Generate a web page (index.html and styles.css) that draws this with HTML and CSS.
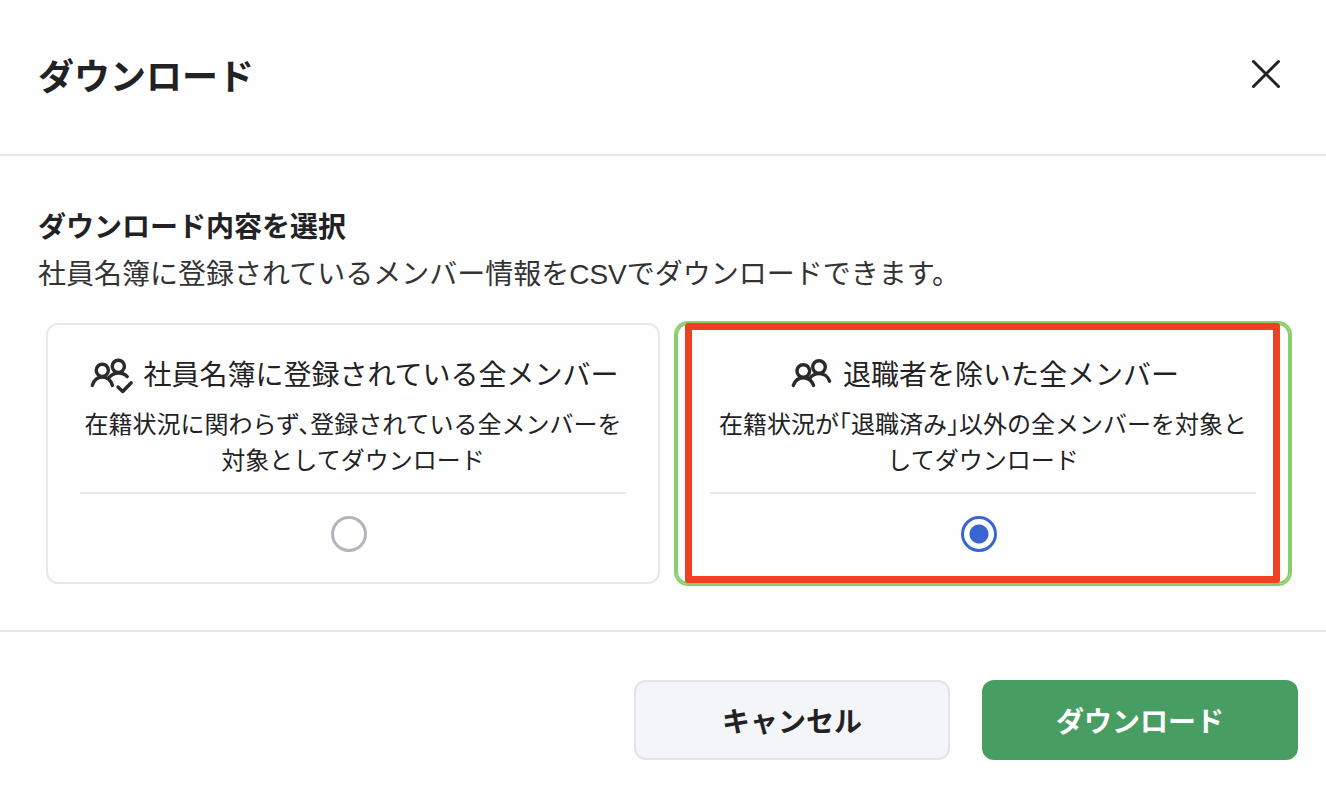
FILE: index.html
```html
<!DOCTYPE html>
<html lang="ja">
<head>
<meta charset="UTF-8" />
<meta name="viewport" content="width=device-width, initial-scale=1" />
<title>ダウンロード</title>
<link rel="stylesheet" href="styles.css">
</head>
<body>
<main class="modal">
    <header class="modal-header">
        <h1>ダウンロード</h1>
        <button type="button" class="close-btn" aria-label="閉じる">
            <svg viewBox="0 0 48 48" aria-hidden="true">
                <path d="M11.5 11.5L36.5 36.5M36.5 11.5L11.5 36.5" />
            </svg>
        </button>
    </header>

    <form id="downloadForm">
        <section class="modal-body">
            <h2 id="targetTitle">ダウンロード内容を選択</h2>
            <p class="lead">社員名簿に登録されているメンバー情報をCSVでダウンロードできます。</p>

            <div class="options" role="radiogroup" aria-labelledby="targetTitle">
                <label class="option" for="targetAll">
                    <span class="option-title">
                        <svg class="icon" viewBox="0 0 48 48" aria-hidden="true">
                            <circle cx="15.3" cy="21.3" r="6.1" />
                            <path d="M5.3 36.4C7 31 10.8 28 15.3 28S23.8 31 25.4 36.4" />
                            <circle cx="31.3" cy="17.3" r="6.1" />
                            <path d="M22.4 28.2C24.8 25.3 27.8 24 31.3 24C35 24 38 25.2 40.2 27.6" />
                            <path d="M31 38L35.7 42.5L44.2 33.8" />
                        </svg>
                        <span>社員名簿に登録されている全メンバー</span>
                    </span>
                    <span class="option-text">在籍状況に関わらず、登録されている全メンバーを対象としてダウンロード</span>
                    <span class="option-radio">
                        <input type="radio" id="targetAll" name="target" value="all" />
                    </span>
                </label>

                <label class="option" for="targetActive">
                    <span class="option-title">
                        <svg class="icon" viewBox="0 0 48 48" aria-hidden="true">
                            <circle cx="16.3" cy="22" r="6.3" />
                            <path d="M6.3 36.4C8 31.5 11.8 28.7 16.3 28.7S24.8 31.5 26.6 36.4" />
                            <circle cx="32" cy="18" r="6.3" />
                            <path d="M23 29C25.4 26 28.5 24.6 32 24.6C36.8 24.6 41 27.6 42.6 32.2" />
                        </svg>
                        <span>退職者を除いた全メンバー</span>
                    </span>
                    <span class="option-text">在籍状況が「退職済み」以外の全メンバーを対象としてダウンロード</span>
                    <span class="option-radio">
                        <input type="radio" id="targetActive" name="target" value="active" checked />
                    </span>
                    <span class="highlight"></span>
                </label>
            </div>
        </section>

        <footer class="modal-footer">
            <button type="button" class="btn btn-cancel">キャンセル</button>
            <button type="submit" class="btn btn-submit">ダウンロード</button>
        </footer>
    </form>
</main>
</body>
</html>
```

FILE: styles.css
```css
* {
    box-sizing: border-box;
}
body {
    margin: 0;
    background: #fefefe;
    color: #222224;
    font-family: "Noto Sans CJK JP", sans-serif;
    font-size: 28px;
}
h1, h2, p {
    margin: 0;
}
button {
    font-family: inherit;
    cursor: pointer;
}

/* header */
.modal-header {
    display: flex;
    justify-content: space-between;
    align-items: center;
    padding: 50px 36px 56px 38px;
    border-bottom: 2px solid #e5e5eb;
}
h1 {
    font-size: 36px;
    line-height: 48px;
}
.close-btn {
    width: 48px;
    height: 48px;
    padding: 0;
    border: none;
    background: none;
}
.close-btn svg {
    display: block;
    fill: none;
    stroke: #222224;
    stroke-width: 3;
    stroke-linecap: round;
}

/* body */
.modal-body {
    padding: 48px 36px 46px 38px;
}
h2 {
    font-size: 28px;
    line-height: 42px;
}
.lead {
    margin-top: 8px;
    font-family: "Liberation Sans", "Noto Sans CJK JP", sans-serif;
    line-height: 42px;
    color: #333333;
}
.options {
    display: grid;
    grid-template-columns: 1fr 1fr;
    gap: 16px;
    margin: 27px 0 0 8px;
}
.option {
    position: relative;
    display: flex;
    flex-direction: column;
    padding: 24px 32px 30px;
    border: 2px solid #e8e8e8;
    border-radius: 12px;
    text-align: center;
    cursor: pointer;
}
.option:has(input:checked) {
    border-color: #88cf6c;
    box-shadow: 0 0 0 2px #88cf6c;
}
.option-title {
    display: flex;
    justify-content: center;
    align-items: center;
    gap: 8px;
    line-height: 48px;
}
.icon {
    flex: none;
    width: 48px;
    height: 48px;
    fill: none;
    stroke: #2a2a2c;
    stroke-width: 3.4;
    stroke-linecap: round;
    stroke-linejoin: round;
}
.option-text {
    margin-top: 8px;
    padding-bottom: 15px;
    border-bottom: 2px solid #e8e8e8;
    font-size: 24px;
    line-height: 36px;
    font-feature-settings: "halt";
}
.option-radio {
    display: flex;
    justify-content: center;
    padding-top: 22px;
}
.option-radio input {
    appearance: none;
    width: 36px;
    height: 36px;
    margin: 0 8px 0 0;
    border: 3px solid #b4b4ba;
    border-radius: 50%;
    background: #fff;
}
.option-radio input:checked {
    border-color: #3a66d4;
    background: radial-gradient(circle, #3a66d4 9px, #fff 10px);
}
.highlight {
    position: absolute;
    inset: -2px 8px -1px 7px;
    border: 7px solid #ee4023;
    border-radius: 3px;
    pointer-events: none;
}

/* footer */
.modal-footer {
    display: flex;
    justify-content: flex-end;
    gap: 32px;
    padding: 48px 28px 36px;
    border-top: 2px solid #e5e5eb;
}
.btn {
    width: 316px;
    height: 80px;
    border: 2px solid #e4e5ea;
    border-radius: 12px;
    font-size: 28px;
    font-weight: bold;
}
.btn-cancel {
    background: #f4f5f9;
    color: #222224;
}
.btn-submit {
    border-color: #489d62;
    background: #489d62;
    color: #fff;
}
```
